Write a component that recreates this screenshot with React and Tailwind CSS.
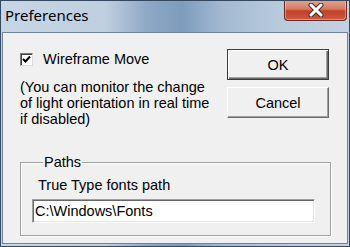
export default function App() {
  return (
    <div className="w-[350px] h-[247px] flex flex-col border border-[#34495f] bg-[linear-gradient(90deg,#c7d6e5_0%,#bfcfe0_30%,#8ea8c5_42%,#7f9cbd_52%,#a4bad2_64%,#b9cadd_80%,#c3d2e2_100%)] overflow-hidden font-['Liberation_Sans',Arial,sans-serif] text-black">
      {/* title bar */}
      <div className="h-[31px] flex items-start justify-between pl-[4px] pr-[2px]">
        <span className="mt-[4px] text-[15px] leading-[20px] font-['Noto_Sans',sans-serif] text-black">
          Preferences
        </span>
        <button className="-mt-px w-[63px] h-[21px] flex items-center justify-center rounded-b-[4px] border border-t-0 border-[#6b2a1f] bg-[linear-gradient(180deg,#e2a594_0%,#d47a62_45%,#c2402a_55%,#cf5a3e_100%)] shadow-[inset_0_0_0_1px_rgba(255,255,255,0.35)]">
          <svg width="16" height="14" viewBox="0 0 16 14">
            <path d="M3 2 L13 12 M13 2 L3 12" stroke="#4a3030" strokeWidth="5" strokeLinecap="round" />
            <path d="M3 2 L13 12 M13 2 L3 12" stroke="#ffffff" strokeWidth="3" strokeLinecap="round" />
          </svg>
        </button>
      </div>

      {/* client area */}
      <div className="flex-1 mx-px mb-[2px] border border-[#6f849a] bg-[#f0f0f0] pl-[17px] pt-[16px] text-[14.5px] leading-[16px]">
        <div className="flex">
          <div className="w-[207px] pt-[2px]">
            <label className="flex items-center">
              <span className="w-[13px] h-[13px] flex items-center justify-center bg-white border border-t-[#7a7a7a] border-l-[#7a7a7a] border-b-[#dcdcdc] border-r-[#dcdcdc] shadow-[inset_1px_1px_0_#404040]">
                <svg width="9" height="9" viewBox="0 0 9 9">
                  <path d="M1 4 L3.5 6.5 L8 1.5" fill="none" stroke="#000" strokeWidth="2" />
                </svg>
              </span>
              <span className="ml-[10px]">Wireframe Move</span>
            </label>
            <p className="mt-[12px] w-[200px]">
              (You can monitor the change of light orientation in real time if disabled)
            </p>
          </div>
          <div className="flex flex-col gap-[7px]">
            <button className="w-[102px] h-[31px] bg-[#f0f0f0] border border-[#3c3c3c] shadow-[inset_1px_1px_0_#fff,inset_-1px_-1px_0_#696969,inset_-2px_-2px_0_#a0a0a0]">
              OK
            </button>
            <button className="w-[102px] h-[31px] bg-[#f0f0f0] border border-t-white border-l-white border-b-[#696969] border-r-[#696969] shadow-[inset_-1px_-1px_0_#a0a0a0]">
              Cancel
            </button>
          </div>
        </div>

        <fieldset className="mt-[27px] w-[311px] border border-[#a0a0a0] shadow-[inset_1px_1px_0_#fff,1px_1px_0_#fff] pl-[11px] pb-[12px]">
          <legend className="ml-[11px] px-px leading-[16px]">Paths</legend>
          <div className="mt-[7px] ml-[6px]">True Type fonts path</div>
          <input
            readOnly
            value="C:\Windows\Fonts"
            className="mt-[6px] w-[283px] h-[24px] px-[2px] bg-white outline-none border border-t-[#a0a0a0] border-l-[#a0a0a0] border-b-white border-r-white shadow-[inset_1px_1px_0_#696969,inset_-1px_-1px_0_#e3e3e3] font-['Liberation_Sans',Arial,sans-serif] text-[14.5px]"
          />
        </fieldset>
      </div>
    </div>
  );
}
